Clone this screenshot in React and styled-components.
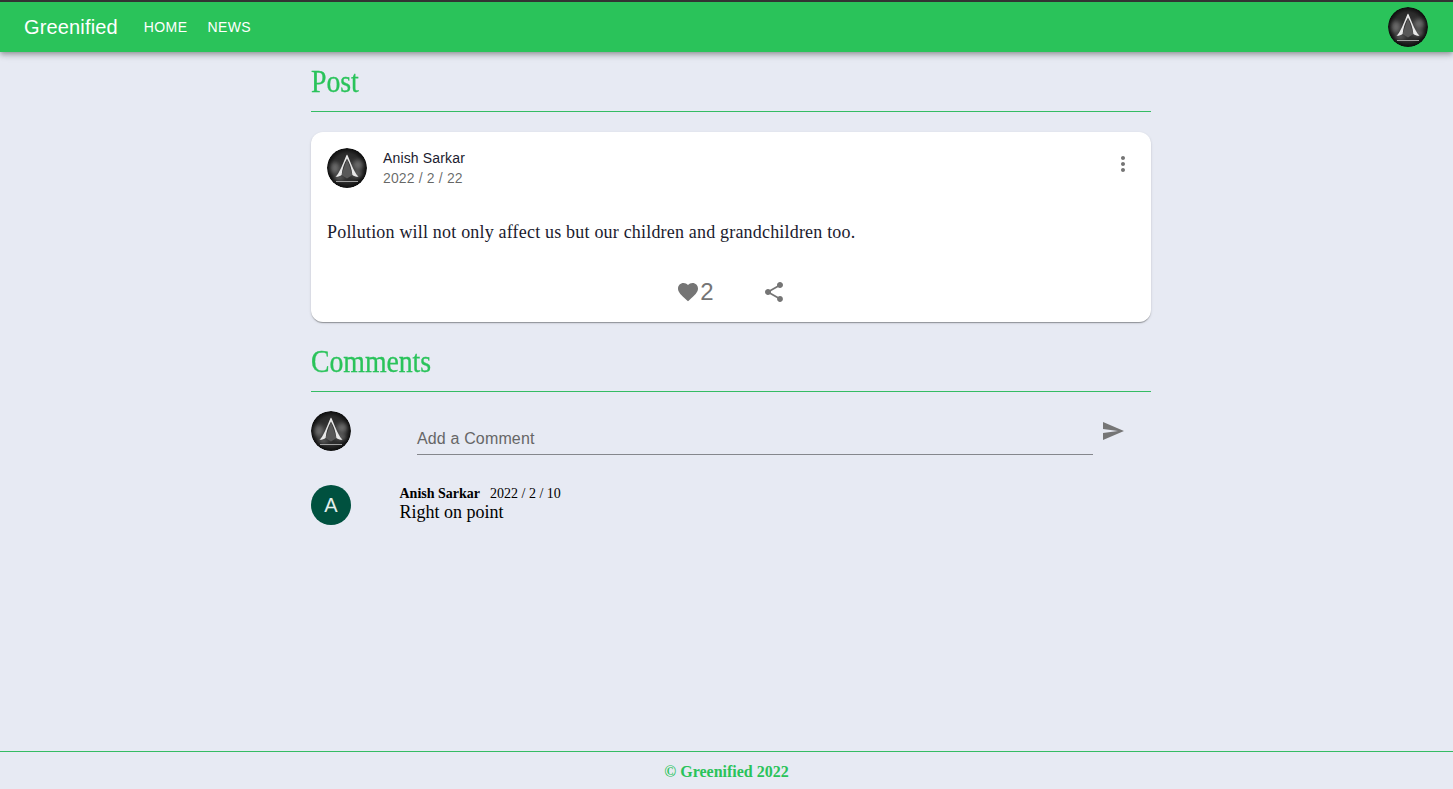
import React from "react";
import styled, { createGlobalStyle } from "styled-components";

const GlobalStyle = createGlobalStyle`
  html, body {
    margin: 0;
    padding: 0;
    background: #e7eaf3;
  }
`;

function Logo({ id }) {
  return (
    <svg viewBox="0 0 40 40" width="100%" height="100%">
      <defs>
        <radialGradient id={id} cx="50%" cy="50%" r="52%">
          <stop offset="0%" stopColor="#3a3a3a" />
          <stop offset="70%" stopColor="#2a2a2a" />
          <stop offset="100%" stopColor="#070707" />
        </radialGradient>
        <filter id={`${id}-blur`} x="-30%" y="-30%" width="160%" height="160%">
          <feGaussianBlur stdDeviation="2" />
        </filter>
      </defs>
      <circle cx="20" cy="20" r="20" fill={`url(#${id})`} />
      <g filter={`url(#${id}-blur)`} fill="#b8b8b8" opacity="0.45">
        <ellipse cx="8" cy="20" rx="4.5" ry="6" />
        <ellipse cx="31" cy="17" rx="5" ry="5" />
        <ellipse cx="30" cy="26" rx="5" ry="2.5" />
        <ellipse cx="12" cy="30" rx="5" ry="2" />
      </g>
      <path d="M20 11 L25.5 27 L20 30.5 L14.5 27 Z" fill="#585858" />
      <path
        d="M20 6.5 L19.2 7.8 C17.6 12 14.8 19 12 24 C11.2 25.6 10 27.4 8.5 28.8 C10.8 29 12.9 28.2 14.6 27 C15.2 21 17.2 15 20 10.5 Z"
        fill="#e8e8e8"
      />
      <path
        d="M20 6.5 L20.8 7.8 C22.4 12 25.2 19 28 24 C28.8 25.6 30 27.4 31.5 28.8 C29.2 29 27.1 28.2 25.4 27 C24.8 21 22.8 15 20 10.5 Z"
        fill="#e8e8e8"
      />
      <rect x="9" y="33" width="22" height="1" fill="#a0a0a0" />
    </svg>
  );
}

function Icon({ d, size = 24 }) {
  return (
    <Glyph viewBox="0 0 24 24" $size={size}>
      <path d={d} />
    </Glyph>
  );
}

const HEART =
  "m12 21.35-1.45-1.32C5.4 15.36 2 12.28 2 8.5 2 5.42 4.42 3 7.5 3c1.74 0 3.41.81 4.5 2.09C13.09 3.81 14.76 3 16.5 3 19.58 3 22 5.42 22 8.5c0 3.78-3.4 6.86-8.55 11.54L12 21.35z";
const SHARE =
  "M18 16.08c-.76 0-1.44.3-1.96.77L8.91 12.7c.05-.23.09-.46.09-.7s-.04-.47-.09-.7l7.05-4.11c.54.5 1.25.81 2.04.81 1.66 0 3-1.34 3-3s-1.34-3-3-3-3 1.34-3 3c0 .24.04.47.09.7L8.04 9.81C7.5 9.31 6.79 9 6 9c-1.66 0-3 1.34-3 3s1.34 3 3 3c.79 0 1.5-.31 2.04-.81l7.12 4.16c-.05.21-.08.43-.08.65 0 1.61 1.31 2.92 2.92 2.92 1.61 0 2.92-1.31 2.92-2.92s-1.31-2.92-2.92-2.92z";
const SEND = "M2.01 21 23 12 2.01 3 2 10l15 2-15 2z";
const MORE =
  "M12 8c1.1 0 2-.9 2-2s-.9-2-2-2-2 .9-2 2 .9 2 2 2zm0 2c-1.1 0-2 .9-2 2s.9 2 2 2 2-.9 2-2-.9-2-2-2zm0 6c-1.1 0-2 .9-2 2s.9 2 2 2 2-.9 2-2-.9-2-2-2z";

function App() {
  return (
    <Page>
      <GlobalStyle />
      <TopBar>
        <Brand>Greenified</Brand>
        <NavLink>HOME</NavLink>
        <NavLink>NEWS</NavLink>
        <Spacer />
        <Avatar>
          <Logo id="logo-nav" />
        </Avatar>
      </TopBar>
      <Main>
        <SectionTitle>Post</SectionTitle>
        <Divider />
        <Card>
          <CardHeader>
            <Avatar>
              <Logo id="logo-post" />
            </Avatar>
            <Author>
              <AuthorName>Anish Sarkar</AuthorName>
              <PostDate>2022 / 2 / 22</PostDate>
            </Author>
            <MoreButton>
              <Icon d={MORE} />
            </MoreButton>
          </CardHeader>
          <PostBody>
            Pollution will not only affect us but our children and grandchildren
            too.
          </PostBody>
          <Actions>
            <LikeButton>
              <Icon d={HEART} />
              <LikeCount>2</LikeCount>
            </LikeButton>
            <ShareButton>
              <Icon d={SHARE} />
            </ShareButton>
          </Actions>
        </Card>
        <SectionTitle $spaced>Comments</SectionTitle>
        <Divider />
        <CommentForm>
          <Avatar>
            <Logo id="logo-form" />
          </Avatar>
          <CommentField>Add a Comment</CommentField>
          <SendButton>
            <Icon d={SEND} />
          </SendButton>
        </CommentForm>
        <Comment>
          <LetterAvatar>A</LetterAvatar>
          <CommentText>
            <CommentMeta>
              <CommentAuthor>Anish Sarkar</CommentAuthor>
              <span>2022 / 2 / 10</span>
            </CommentMeta>
            <CommentBody>Right on point</CommentBody>
          </CommentText>
        </Comment>
      </Main>
      <Footer>© Greenified 2022</Footer>
    </Page>
  );
}

const Page = styled.div`
  min-height: 100vh;
  display: flex;
  flex-direction: column;
  font-family: "Liberation Sans", Arial, sans-serif;
`;

const TopBar = styled.header`
  height: 50px;
  border-top: 2px solid #333;
  padding: 0 25px 0 24px;
  display: flex;
  align-items: center;
  background: #2ac35a;
  color: #fff;
  box-shadow: 0 2px 4px -1px rgba(0, 0, 0, 0.2), 0 4px 5px 0 rgba(0, 0, 0, 0.14),
    0 1px 10px 0 rgba(0, 0, 0, 0.12);
  position: relative;
`;

const Brand = styled.div`
  font-size: 20px;
  line-height: 24px;
  letter-spacing: 0.15px;
  margin-right: 16px;
`;

const NavLink = styled.a`
  font-size: 14px;
  line-height: 24px;
  padding: 0 10px;
  letter-spacing: 0.4px;
`;

const Spacer = styled.div`
  flex: 1;
`;

const Avatar = styled.div`
  width: 40px;
  height: 40px;
  flex: none;
  border-radius: 50%;
  overflow: hidden;
`;

const Main = styled.main`
  flex: 1;
  width: 840px;
  margin-left: 311px;
`;

const SectionTitle = styled.h2`
  margin: ${(p) => (p.$spaced ? "10px" : "0")} 0 0;
  height: 59px;
  line-height: 58px;
  font-family: "Liberation Serif", serif;
  font-weight: 400;
  font-size: 32px;
  letter-spacing: -0.1px;
  -webkit-text-stroke: 0.3px #2ac35a;
  color: #2ac35a;
  transform: scaleX(0.87);
  transform-origin: left center;
`;

const Divider = styled.hr`
  margin: 0;
  border: 0;
  height: 1px;
  background: #35bc63;
`;

const Card = styled.article`
  margin-top: 20px;
  height: 190px;
  border-radius: 12px;
  background: #fff;
  box-shadow: 0 2px 1px -1px rgba(0, 0, 0, 0.2), 0 1px 1px 0 rgba(0, 0, 0, 0.14),
    0 1px 3px 0 rgba(0, 0, 0, 0.12);
  display: flex;
  flex-direction: column;
`;

const CardHeader = styled.div`
  padding: 16px;
  display: flex;
  align-items: center;
`;

const Author = styled.div`
  flex: 1;
  margin-left: 16px;
  font-size: 14px;
  line-height: 20px;
  letter-spacing: 0.15px;
`;

const AuthorName = styled.div`
  color: #1b1b2e;
`;

const PostDate = styled.div`
  color: rgba(0, 0, 0, 0.6);
`;

const Glyph = styled.svg`
  width: ${(p) => p.$size}px;
  height: ${(p) => p.$size}px;
  flex: none;
  fill: currentColor;
  display: block;
`;

const MoreButton = styled.div`
  color: #757575;
  align-self: flex-start;
  padding-top: 4px;
`;

const PostBody = styled.p`
  margin: 0;
  padding: 15px 16px 0;
  font-family: "Liberation Serif", serif;
  font-size: 18px;
  line-height: 26px;
  letter-spacing: 0.19px;
  color: #1b1b2e;
`;

const Actions = styled.div`
  margin-top: auto;
  height: 60px;
  display: flex;
  align-items: center;
  justify-content: center;
  color: #757575;
`;

const LikeButton = styled.div`
  display: flex;
  align-items: center;
`;

const LikeCount = styled.span`
  font-size: 24px;
`;

const ShareButton = styled.div`
  margin-left: 48px;
`;

const CommentForm = styled.div`
  margin-top: 19px;
  display: flex;
  align-items: flex-start;
`;

const CommentField = styled.div`
  margin: 5px 0 0 66px;
  flex: 1;
  max-width: 676px;
  height: 39px;
  box-sizing: border-box;
  padding-top: 14px;
  border-bottom: 1px solid #85878c;
  font-size: 16px;
  line-height: 17px;
  letter-spacing: 0.15px;
  color: #666;
`;

const SendButton = styled.div`
  margin: 8px 0 0 8px;
  color: #757575;
`;

const Comment = styled.div`
  margin-top: 30px;
  display: flex;
`;

const LetterAvatar = styled.div`
  width: 40px;
  height: 40px;
  flex: none;
  border-radius: 50%;
  background: #00513f;
  color: #e3efec;
  display: flex;
  align-items: center;
  justify-content: center;
  font-size: 20px;
`;

const CommentText = styled.div`
  margin-left: 48.5px;
  padding-top: 1px;
  font-family: "Liberation Serif", serif;
  color: #000;
`;

const CommentMeta = styled.div`
  font-size: 14px;
  line-height: 16px;
`;

const CommentAuthor = styled.b`
  margin-right: 10px;
`;

const CommentBody = styled.div`
  font-size: 18px;
  line-height: 20px;
`;

const Footer = styled.footer`
  height: 35px;
  padding-top: 2px;
  border-top: 1px solid #35bc63;
  display: flex;
  align-items: center;
  justify-content: center;
  font-family: "Liberation Serif", serif;
  font-weight: 700;
  font-size: 16px;
  color: #2ac35a;
`;

export default App;
